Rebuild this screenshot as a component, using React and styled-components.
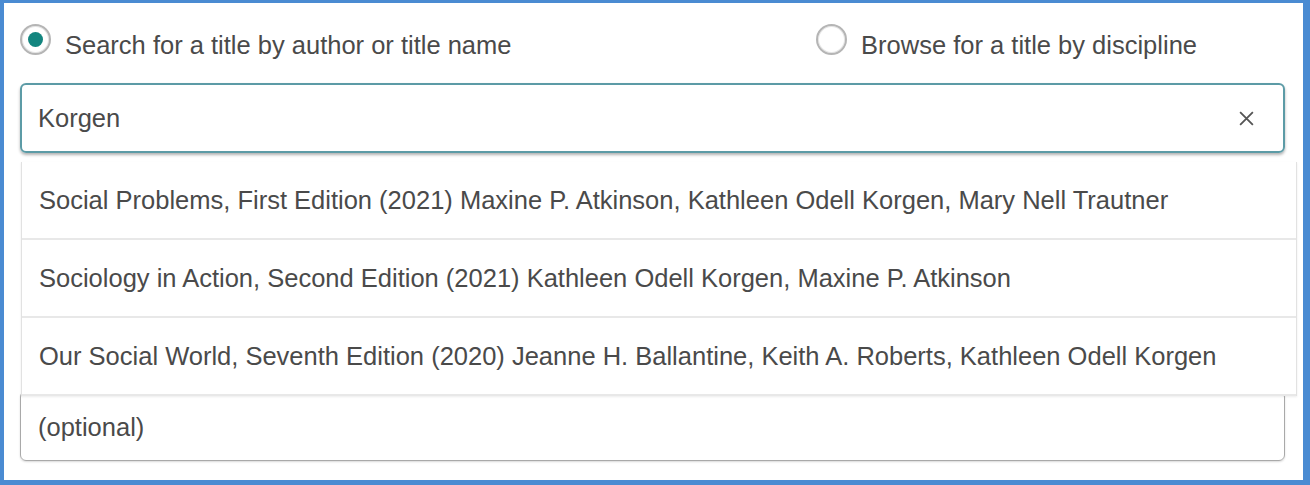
import React, { useState } from 'react'
import styled, { createGlobalStyle } from 'styled-components'

const GlobalStyle = createGlobalStyle`
  html, body {
    margin: 0;
    padding: 0;
    background: #fff;
  }
  body {
    font-family: "Liberation Sans", Arial, sans-serif;
    color: #444;
  }
`

const results = [
  'Social Problems, First Edition (2021) Maxine P. Atkinson, Kathleen Odell Korgen, Mary Nell Trautner',
  'Sociology in Action, Second Edition (2021) Kathleen Odell Korgen, Maxine P. Atkinson',
  'Our Social World, Seventh Edition (2020) Jeanne H. Ballantine, Keith A. Roberts, Kathleen Odell Korgen',
]

const App = () => {
  const [mode, setMode] = useState('search')
  const [query, setQuery] = useState('Korgen')

  return (
    <Frame>
      <GlobalStyle />
      <RadioRow>
        <RadioOption onClick={() => setMode('search')}>
          <RadioCircle checked={mode === 'search'} />
          Search for a title by author or title name
        </RadioOption>
        <RadioOption onClick={() => setMode('browse')}>
          <RadioCircle checked={mode === 'browse'} />
          Browse for a title by discipline
        </RadioOption>
      </RadioRow>

      <SearchWrap>
        <SearchBox>
          <SearchInput value={query} onChange={e => setQuery(e.target.value)} />
          <ClearButton onClick={() => setQuery('')}>
            <svg width="17" height="17" viewBox="0 0 16 16">
              <path d="M2 2 L14 14 M14 2 L2 14" stroke="#555" strokeWidth="1.7" fill="none" />
            </svg>
          </ClearButton>
        </SearchBox>
        {query && (
          <Dropdown>
            {results.map((item, index) => (
              <Option key={index}>{item}</Option>
            ))}
          </Dropdown>
        )}
      </SearchWrap>

      <OptionalBox>
        <OptionalInput placeholder="(optional)" />
      </OptionalBox>
    </Frame>
  )
}

export default App

const Frame = styled.div`
  box-sizing: border-box;
  width: 1310px;
  height: 485px;
  border-style: solid;
  border-color: #4a8bd2;
  border-width: 3px 7px 5px 4px;
  padding: 22px 18px 0 16px;
  background: #fff;
`

const RadioRow = styled.div`
  display: flex;
  align-items: center;
  justify-content: space-between;
  padding-right: 88px;
  height: 40px;
  margin-bottom: 18px;
`

const RadioOption = styled.label`
  display: flex;
  align-items: center;
  gap: 14px;
  font-size: 25.5px;
  color: #4a4a4a;
  cursor: pointer;
`

const RadioCircle = styled.span`
  box-sizing: border-box;
  width: 31px;
  height: 31px;
  margin-bottom: 12px;
  border-radius: 50%;
  border: 2px solid #b5b5b5;
  box-shadow: inset 0 0 0 1px #e6e6e6;
  display: flex;
  align-items: center;
  justify-content: center;

  &::after {
    content: '';
    width: 15px;
    height: 15px;
    border-radius: 50%;
    background: ${props => props.checked ? '#13857f' : 'transparent'};
  }
`

const SearchWrap = styled.div`
  position: relative;
`

const SearchBox = styled.div`
  box-sizing: border-box;
  height: 70px;
  display: flex;
  align-items: center;
  border: 2px solid #5c9ba6;
  border-radius: 6px;
  box-shadow: 0 2px 3px rgba(0, 0, 0, 0.3);
  padding: 0 28px 0 16px;
  width: 1265px;
`

const SearchInput = styled.input`
  flex: 1;
  border: none;
  outline: none;
  font-family: inherit;
  font-size: 25.5px;
  color: #4a4a4a;
  background: transparent;
  padding: 0;
`

const ClearButton = styled.button`
  border: none;
  background: none;
  padding: 0;
  display: flex;
  cursor: pointer;
`

const Dropdown = styled.div`
  position: absolute;
  top: 79px;
  left: 1px;
  width: 1274px;
  background: #fff;
  border-left: 1px solid #e2e2e2;
  border-right: 1px solid #e2e2e2;
  box-shadow: 0 1px 2px rgba(0, 0, 0, 0.08);
  z-index: 2;
`

const Option = styled.div`
  box-sizing: border-box;
  height: 78px;
  display: flex;
  align-items: center;
  padding-left: 17px;
  font-size: 25.5px;
  color: #4a4a4a;
  border-bottom: 2px solid #e8e8e8;
  cursor: pointer;

  &:hover {
    background: #f6f6f6;
  }
`

const OptionalBox = styled.div`
  box-sizing: border-box;
  margin-top: 238px;
  width: 1265px;
  height: 70px;
  border: 1.5px solid #a9a9a9;
  border-radius: 6px;
  box-shadow: 0 1px 2px rgba(0, 0, 0, 0.15);
  display: flex;
  align-items: flex-end;
  padding: 0 16px 18px 17px;
`

const OptionalInput = styled.input`
  flex: 1;
  border: none;
  outline: none;
  font-family: inherit;
  font-size: 25.5px;
  padding: 0;
  background: transparent;

  &::placeholder {
    color: #4a4a4a;
  }
`
